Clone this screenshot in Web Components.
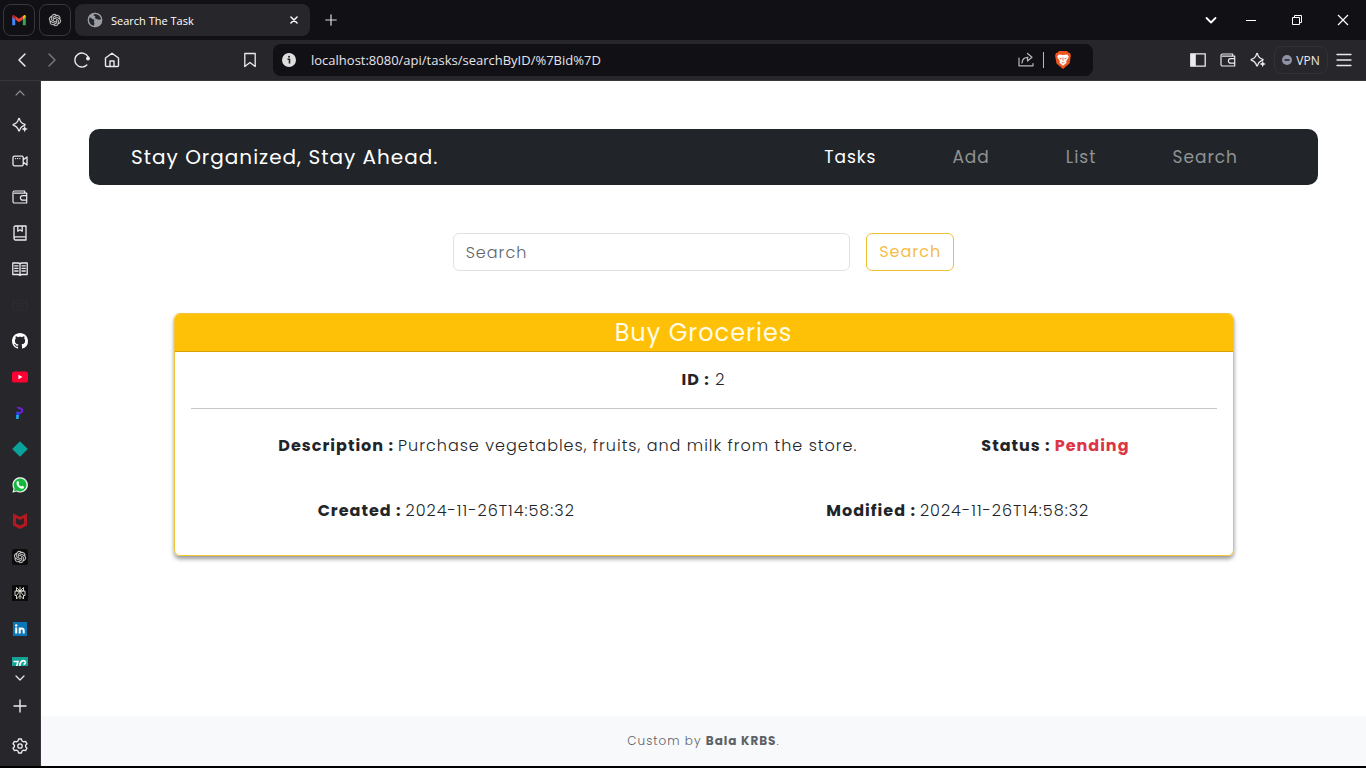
<!DOCTYPE html>
<html lang="en">
<head>
<meta charset="utf-8">
<title>Search The Task</title>
<style>
  html, body { margin: 0; height: 100%; background: #000; }
  body { font-family: "Open Sans", "Noto Sans", sans-serif; }
</style>
</head>
<body>
<browser-window>
  <tab-strip slot="tabs"></tab-strip>
  <tool-bar slot="toolbar"></tool-bar>
  <side-panel slot="side"></side-panel>
  <task-page>
    <task-nav slot="nav"></task-nav>
    <task-search></task-search>
    <task-card>
      <span slot="title">Buy Groceries</span>
      <span slot="id">2</span>
      <span slot="description">Purchase vegetables, fruits, and milk from the store.</span>
      <span slot="status">Pending</span>
      <span slot="created">2024-11-26T14:58:32</span>
      <span slot="modified">2024-11-26T14:58:32</span>
    </task-card>
    <page-footer slot="footer"></page-footer>
  </task-page>
</browser-window>

<script>
const KNOT = 'M22.2819 9.8211a5.9847 5.9847 0 0 0-.5157-4.9108 6.0462 6.0462 0 0 0-6.5098-2.9A6.0651 6.0651 0 0 0 4.9807 4.1818a5.9847 5.9847 0 0 0-3.9977 2.9 6.0462 6.0462 0 0 0 .7427 7.0966 5.98 5.98 0 0 0 .511 4.9107 6.051 6.051 0 0 0 6.5146 2.9001A5.9847 5.9847 0 0 0 13.2599 24a6.0557 6.0557 0 0 0 5.7718-4.2058 5.9894 5.9894 0 0 0 3.9977-2.9001 6.0557 6.0557 0 0 0-.7475-7.0729zm-9.022 12.6081a4.4755 4.4755 0 0 1-2.8764-1.0408l.1419-.0804 4.7783-2.7582a.7948.7948 0 0 0 .3927-.6813v-6.7369l2.02 1.1686a.071.071 0 0 1 .038.052v5.5826a4.504 4.504 0 0 1-4.4945 4.4944zm-9.6607-4.1254a4.4708 4.4708 0 0 1-.5346-3.0137l.142.0852 4.783 2.7582a.7712.7712 0 0 0 .7806 0l5.8428-3.3685v2.3324a.0804.0804 0 0 1-.0332.0615L9.74 19.9502a4.4992 4.4992 0 0 1-6.1408-1.6464zM2.3408 7.8956a4.485 4.485 0 0 1 2.3655-1.9728V11.6a.7664.7664 0 0 0 .3879.6765l5.8144 3.3543-2.0201 1.1685a.0757.0757 0 0 1-.071 0l-4.8303-2.7865A4.504 4.504 0 0 1 2.3408 7.872zm16.5963 3.8558L13.1038 8.364 15.1192 7.2a.0757.0757 0 0 1 .071 0l4.8303 2.7913a4.4944 4.4944 0 0 1-.6765 8.1042v-5.6772a.79.79 0 0 0-.407-.667zm2.0107-3.0231l-.142-.0852-4.7735-2.7818a.7759.7759 0 0 0-.7854 0L9.409 9.2297V6.8974a.0662.0662 0 0 1 .0284-.0615l4.8303-2.7866a4.4992 4.4992 0 0 1 6.6802 4.66zM8.3065 12.863l-2.02-1.1638a.0804.0804 0 0 1-.038-.0567V6.0742a4.4992 4.4992 0 0 1 7.3757-3.4537l-.142.0805L8.704 5.459a.7948.7948 0 0 0-.3927.6813zm1.0976-2.3654l2.602-1.4998 2.6069 1.4998v2.9994l-2.5974 1.4997-2.6067-1.4997Z';

/* Each icon: drawn on a 16 x 16 grid, in the current colour unless it is a brand mark. */
const line = (d, w = 1.3) => `<path d="${d}" fill="none" stroke="currentColor" stroke-width="${w}" stroke-linecap="round" stroke-linejoin="round"/>`;
const ICONS = {
  gmail: '<path d="M1.2 13.2V4.3l3 2.3v6.6z" fill="#4285f4"/><path d="M11.8 13.2V6.6l3-2.3v8.900z" fill="#34a853"/><path d="M11.800 4.200l1.100-.9c1-.6 1.900 0 1.900 1.200v.6l-3 2.300z" fill="#fbbc04"/><path d="M4.200 3.900L8 6.800l3.800-2.900v3.500L8 10.300 4.200 7.400z" fill="#ea4335"/><path d="M1.200 4.500c0-1.200 1-1.800 2-1.200l1 .7v3.400l-3-2.300z" fill="#c5221f"/>',
  knot: `<g transform="translate(2 2) scale(.5)"><path d="${KNOT}" fill="#d8d8d8" stroke="#d8d8d8" stroke-width=".4"/></g>`,
  knotbox: `<rect width="16" height="16" rx="2" fill="#0c0c0d"/><g transform="translate(2 2) scale(.5)"><path d="${KNOT}" fill="#d8d8d8" stroke="#d8d8d8" stroke-width=".4"/></g>`,
  globe: '<circle cx="8" cy="8" r="7.200" fill="#9a9ea4"/><path d="M2.500 5.200c1.500.2 2.200 1.800 3.600 2 1.400.2 1.600 1 .9 2-.6.900.5 1.300.4 2.400-.1 1.300-.8 2-1 3.400C3 14 .8 11.500.8 8c0-1 .8-2.500 1.700-2.800zM7 2.200c1.500.300 2.500-.5 4-.3 2 1 3.500 3 4 5.300-1 .9-2.200-.2-3.200.4-1.200.5-1.400-.8-2.600-.8-1 0-1.500-.9-.9-1.700.5-.7-.6-.8-1.200-1.300-.6-.4-.6-1.200-.1-1.600z" fill="#27262b"/><circle cx="8" cy="8" r="6.700" fill="none" stroke="#9a9ea4" stroke-width="1.300"/>',
  close: line('M4.500 4.500l7 7M11.500 4.500l-7 7', 1.700),
  plus: line('M8 2v12M2 8h12', 1.400),
  down: line('M3.500 6l4.500 4.500L12.500 6', 1.800),
  thindown: line('M4 6l4 4 4-4', 1.200),
  thinup: line('M4 10l4-4 4 4', 1.200),
  minimise: '<path d="M3 8.500h10" stroke="currentColor" fill="none"/>',
  restore: '<path d="M3.500 5.500h7v7h-7zM5.500 5.500v-2h7v7h-2" stroke="currentColor" fill="none"/>',
  winclose: '<path d="M3 3l10 10M13 3L3 13" stroke="currentColor" fill="none" stroke-width="1.200"/>',
  back: line('M11 2L5 8l6 6', 1.500),
  forward: line('M5 2l6 6-6 6', 1.500),
  reload: line('M12.800 13.100A7 7 0 1 1 14.200 5', 1.400) + '<circle cx="14" cy="6.500" r="1.900" fill="currentColor"/>',
  home: line('M1.500 6L8 1.200 14.500 6v7.500c0 .6-.4 1-1 1h-11c-.6 0-1-.4-1-1zM6 14.300V9h4v5.300', 1.400),
  bookmark: line('M2.800 1.500h10.400v13L8 10.500l-5.200 4z', 1.300),
  info: '<circle cx="8" cy="8" r="7" fill="#dededf"/><path d="M6.500 7.200h2v4.300" stroke="#27262b" stroke-width="1.600" fill="none"/><circle cx="8" cy="4.700" r="1" fill="#27262b"/>',
  share: line('M1 6v7.800h14V11.500M4 11c.2-3.800 2.500-5.700 6-5.700M9.500 1.500L14 5.300 9.500 9V5.300', 1.200),
  brave: '<path d="M4.500 0h7L13 1.500l1.300.2.700 2.500-1.200 7L8 16l-5.800-4.800L1 4.200l.7-2.500L3 1.500z" fill="#f0541e"/><path d="M4.200 3l3.800.6 3.800-.6 1.400 2.200-2.400 4 .4 1.300L8 13l-3.200-2.500.4-1.300-2.400-4z" fill="#fff"/><path d="M4.500 5.700l2.300.7-.7 1.200zM11.500 5.700l-2.300.7.7 1.200zM6.200 9.700l1.800.6 1.800-.6L8 11.200zM7.600 5.800h.8v2.800h-.8z" fill="#f0541e"/>',
  panel: '<path d="M.800 1.800h14.400v12.400H.800z" fill="none" stroke="currentColor" stroke-width="1.300"/><path d="M.800 1.800h5v12.400h-5z" fill="currentColor"/>',
  wallet: line('M12.700 4V2H2.500A1.500 1.500 0 0 0 1 3.500v9A1.500 1.500 0 0 0 2.500 14h12.200V4.200H2.500M14.700 6.600h-4a2.300 2.300 0 0 0 0 4.600h4z', 1.200),
  sparkle: line('M10.300 9.300C9 9.900 8.200 11 7.600 13.400c-.2.800-.9.800-1.100 0C5.700 10.300 4.800 9.200 1.700 8.300c-.8-.2-.8-.9 0-1.100C4.800 6.300 5.700 5.300 6.500 2.100c.2-.8.9-.8 1.100 0 .8 3.200 1.700 4.200 4.900 5.100.8.2.8.9 0 1.100z', 1.300) + '<path d="M12.700 8.800l.9 2.300 2.300.9-2.300.9-.9 2.300-.9-2.300-2.300-.9 2.300-.9z" fill="currentColor"/>',
  minus: '<circle cx="8" cy="8" r="8" fill="#8f92a6"/><path d="M4 8h8" stroke="#27262b" stroke-width="2.600"/>',
  menu: line('M1 2.500h14M1 8h14M1 13.500h14', 1.300),
  camera: line('M2.400 3.200h7.400a1.400 1.400 0 0 1 1.400 1.400v6.800a1.400 1.400 0 0 1-1.400 1.400H2.400A1.400 1.400 0 0 1 1 11.400V4.600a1.400 1.400 0 0 1 1.400-1.400zM11.300 6.700L15 4v8l-3.700-2.700M3.500 5.600h.1M5.600 5.600h.1M7.800 5.600h.1', 1.300),
  notebook: line('M2 13V2.300A1.300 1.300 0 0 1 3.300 1H14v14H3.500A1.500 1.500 0 0 1 2 13.500 1.800 1.800 0 0 1 3.800 11.800H14M5.800 1.200v5L8 4.800l2.200 1.400v-5', 1.300),
  book: line('M8 2.800C7.500 2 7 2 6 2H.800v11.500H6c1 0 1.500 0 2 1 .5-1 1-1 2-1h5.200V2H10c-1 0-1.500 0-2 .8zM8 3v11M2.700 4.800H6M2.700 7.400H6M2.700 10H6M10 4.800h3.300M10 7.400h3.300M10 10h3.300', 1.300),
  faint: '<g opacity=".04">' + line('M1 3h14v10H1zM1 6h14M4 9h5', 1.200) + '</g>',
  github: '<path fill="#fff" d="M8 0C3.580 0 0 3.580 0 8c0 3.540 2.290 6.530 5.470 7.590.4.070.55-.17.55-.38 0-.19-.01-.82-.01-1.490-2.010.37-2.530-.49-2.690-.94-.09-.23-.48-.94-.82-1.130-.28-.15-.68-.52-.01-.53.63-.01 1.080.58 1.230.82.72 1.210 1.870.87 2.330.66.07-.52.28-.87.51-1.070-1.780-.2-3.640-.89-3.640-3.950 0-.87.31-1.590.82-2.150-.08-.2-.36-1.020.08-2.120 0 0 .67-.21 2.200.82.64-.18 1.320-.27 2-.27s1.360.09 2 .27c1.530-1.040 2.200-.82 2.200-.82.44 1.100.16 1.920.08 2.120.51.56.82 1.270.82 2.150 0 3.070-1.870 3.750-3.650 3.950.29.25.54.73.54 1.480 0 1.070-.01 1.930-.01 2.200 0 .21.15.46.55.38A8.010 8.010 0 0 0 16 8c0-4.420-3.580-8-8-8z"/>',
  youtube: '<rect y="2.400" width="16" height="11.200" rx="2.600" fill="#ff0033"/><path d="M6.400 5.700L10.500 8l-4.100 2.300z" fill="#fff"/>',
  pmark: '<path d="M4.500 2.200c3-.6 6.800.4 6.800 3.200 0 2.600-2.400 3.400-4.600 3.400l.8-2c1.400 0 2-.5 1.800-1.400-.3-1.200-2.700-1-4.800-3.200z" fill="#6a22dd"/><path d="M4.500 6.500l3.200.5-.4 4H4z" fill="#3a3df0"/><path d="M4.100 10h3l-.4 4H4z" fill="#1aa3dc"/>',
  diamond: '<path d="M8 .2L15.800 8 8 15.800.2 8z" fill="#0aa39b"/>',
  whatsapp: '<path d="M.4 15.700l1.100-4A7.700 7.700 0 1 1 4.400 14.600z" fill="#f4f4f4"/><path d="M1.900 14.200l.8-2.700a6.400 6.400 0 1 1 2.100 2z" fill="#12b83b"/><path d="M5.500 4.200c.5-.3 1 0 1.200.6l.4 1c.1.400-.2.700-.6 1.200.7 1.300 1.600 2.100 2.700 2.500.4-.6.700-.9 1-.7l1.600.8c.4.200.2 1.300-.4 1.800-1.300 1-3.400.2-5-1.400S4 6 4.800 4.800z" fill="#fff"/>',
  mcafee: '<path d="M1 .500l7 3.200L15 .500v12L8 16l-7-3.500z" fill="#b3191f"/><path d="M4 5l4 1.900L12 5v5.500l-4 2-4-2z" fill="#27262b"/>',
  perplex: '<rect width="16" height="16" fill="#0b0b0b"/><path d="M8 1.800v12.400M8 6L4.500 2.500V6zM8 6l3.500-3.500V6zM3 6h10v4.500h-1.500V14L8 10.500 4.500 14v-3.500H3zM8 6l-3.500 4.500M8 6l3.500 4.500" fill="none" stroke="#e9e6dc" stroke-width=".9"/>',
  linkedin: '<rect x="1" y="1" width="14" height="14" fill="#0a76b5"/><circle cx="4.200" cy="4.400" r="1.200" fill="#fff"/><path d="M4.200 6.500v6M7.700 12.500v-6M7.700 9.500c0-2.700 4-2.700 4 0v3" fill="none" stroke="#fff" stroke-width="2"/>',
  teal: '<rect width="16" height="16" fill="#15a295"/><path d="M1.500 4.500h4.500L3.500 13M10.500 4c-3 1-3.500 6-1.200 9M9.500 4.200c4-1.700 5.500 2 2 3.300" fill="none" stroke="#fff" stroke-width="1.600"/>',
  gear: line('M6.600 1h2.800l.6 2 1.600.9 2-.5 1.400 2.400L13.600 7.200v1.600L15 10.200l-1.400 2.400-2-.5-1.600.9-.6 2H6.600l-.6-2-1.600-.9-2 .5L1 10.200l1.400-1.400V7.200L1 5.800l1.400-2.400 2 .5L6 3z', 1.300) + '<circle cx="8" cy="8" r="2.200" fill="none" stroke="currentColor" stroke-width="1.300"/>'
};

const define = (name, markup) => {
  const template = document.createElement('template');
  template.innerHTML = markup;
  customElements.define(name, class extends HTMLElement {
    constructor() {
      super();
      this.attachShadow({ mode: 'open' }).append(template.content.cloneNode(true));
    }
  });
};

customElements.define('ui-icon', class extends HTMLElement {
  connectedCallback() {
    if (this.shadowRoot) return;
    this.attachShadow({ mode: 'open' }).innerHTML = `
      <style>:host { display: block; width: 16px; height: 16px; flex: none; } svg { display: block; width: 100%; height: 100%; }</style>
      <svg viewBox="0 0 16 16" aria-hidden="true">${ICONS[this.getAttribute('name')] || ''}</svg>`;
  }
});

define('browser-window', `
  <style>
    :host { display: flex; flex-direction: column; height: 100vh; box-sizing: border-box; border-bottom: 2px solid #000; color: #eceaf0; }
    .body { flex: 1; min-height: 0; display: flex; border-top: 1px solid #38363b; }
    ::slotted(task-page) { flex: 1; min-width: 0; }
  </style>
  <slot name="tabs"></slot>
  <slot name="toolbar"></slot>
  <div class="body"><slot name="side"></slot><slot></slot></div>`);

define('tab-strip', `
  <style>
    :host { display: flex; align-items: center; height: 40px; padding-left: 3px; background: #111015; }
    button { display: grid; place-items: center; border: 0; padding: 0; background: none; color: inherit; font: inherit; height: 32px; }
    .tabs { display: flex; gap: 4px; }
    .pin { box-sizing: border-box; width: 32px; border: 1px solid #38373d; border-radius: 8px; }
    .tab { box-sizing: border-box; display: flex; align-items: center; gap: 8px; width: 235px; height: 32px; padding: 0 8px 0 12px; border-radius: 8px; background: #27262b; font-size: 11px; color: #fff; }
    .tab span { flex: 1; }
    .tab button { width: 16px; }
    .new { width: 42px; color: #d9d8dc; }
    .tab button ui-icon, .new ui-icon { width: 14px; height: 14px; }
    .controls { display: flex; margin-left: auto; color: #fff; }
    .controls button { width: 46px; }
    .controls .list { width: 34px; }
  </style>
  <div class="tabs">
    <button class="pin" aria-label="Mail"><ui-icon name="gmail"></ui-icon></button>
    <button class="pin" aria-label="Chat"><ui-icon name="knot"></ui-icon></button>
    <div class="tab"><ui-icon name="globe"></ui-icon><span>Search The Task</span><button aria-label="Close tab"><ui-icon name="close"></ui-icon></button></div>
  </div>
  <button class="new" aria-label="New tab"><ui-icon name="plus"></ui-icon></button>
  <div class="controls">
    <button class="list" aria-label="Tab list"><ui-icon name="down"></ui-icon></button>
    <button aria-label="Minimise"><ui-icon name="minimise"></ui-icon></button>
    <button aria-label="Restore"><ui-icon name="restore"></ui-icon></button>
    <button aria-label="Close window"><ui-icon name="winclose"></ui-icon></button>
  </div>`);

define('tool-bar', `
  <style>
    :host { display: flex; align-items: center; height: 40px; padding: 0 7px; background: #27262b; }
    button { display: grid; place-items: center; width: 30px; height: 30px; border: 0; padding: 0; background: none; color: inherit; font: inherit; }
    .off { color: #77757c; }
    .group { display: flex; align-items: center; }
    .mark { margin: 0 8px 0 108px; }
    form { flex: 1; min-width: 0; display: flex; align-items: center; height: 32px; border-radius: 8px; background: #111015; margin-right: 90px; padding: 0 13px 0 8px; }
    input { flex: 1; min-width: 0; margin-left: 14px; padding: 0; border: 0; outline: 0; background: none; color: #e6e4ea; font: 13px "Open Sans", "Noto Sans", sans-serif; }
    .share { color: #b9b7bd; }
    .rule { width: 1px; height: 16px; margin: 0 2px; background: #bbb9bf; }
    .brave ui-icon { width: 18px; height: 18px; }
    .brave { width: 34px; }
    .vpn { box-sizing: border-box; display: flex; align-items: center; justify-content: center; gap: 4px; width: 54px; height: 28px; margin: 0 1px; border: 1px solid #323137; border-radius: 8px; font-size: 12px; }
    .vpn ui-icon { width: 10px; height: 10px; }
  </style>
  <div class="group">
    <button aria-label="Back"><ui-icon name="back"></ui-icon></button>
    <button class="off" aria-label="Forward"><ui-icon name="forward"></ui-icon></button>
    <button aria-label="Reload"><ui-icon name="reload"></ui-icon></button>
    <button aria-label="Home"><ui-icon name="home"></ui-icon></button>
  </div>
  <button class="mark" aria-label="Bookmark"><ui-icon name="bookmark"></ui-icon></button>
  <form>
    <ui-icon name="info"></ui-icon>
    <input aria-label="Address" value="localhost:8080/api/tasks/searchByID/%7Bid%7D">
    <button type="button" class="share" aria-label="Share"><ui-icon name="share"></ui-icon></button>
    <span class="rule"></span>
    <button type="button" class="brave" aria-label="Shields"><ui-icon name="brave"></ui-icon></button>
  </form>
  <div class="group">
    <button aria-label="Sidebar"><ui-icon name="panel"></ui-icon></button>
    <button aria-label="Wallet"><ui-icon name="wallet"></ui-icon></button>
    <button aria-label="Assistant"><ui-icon name="sparkle"></ui-icon></button>
    <button class="vpn"><ui-icon name="minus"></ui-icon>VPN</button>
    <button aria-label="Menu"><ui-icon name="menu"></ui-icon></button>
  </div>`);

const SIDE = ['sparkle', 'camera', 'wallet', 'notebook', 'book', 'faint', 'github', 'youtube', 'pmark', 'diamond', 'whatsapp', 'mcafee', 'knotbox', 'perplex', 'linkedin', 'teal'];
define('side-panel', `
  <style>
    :host { display: flex; flex-direction: column; width: 40px; border-right: 1px solid #38363b; background: #27262b; }
    button { display: grid; place-items: center; width: 100%; height: 36px; border: 0; padding: 0; background: none; color: inherit; flex: none; }
    .items { flex: 1; min-height: 0; overflow: hidden; display: flex; flex-direction: column; }
    .up { height: 24px; margin-bottom: 2px; color: #8b8990; }
    .more { height: 24px; }
    .add { height: 32px; margin-bottom: 4px; }
    .gear { height: 40px; }
  </style>
  <button class="up" aria-label="Scroll up"><ui-icon name="thinup"></ui-icon></button>
  <div class="items">${SIDE.map(n => `<button aria-label="${n}"><ui-icon name="${n}"></ui-icon></button>`).join('')}</div>
  <button class="more" aria-label="Scroll down"><ui-icon name="thindown"></ui-icon></button>
  <button class="add" aria-label="Add"><ui-icon name="plus"></ui-icon></button>
  <button class="gear" aria-label="Settings"><ui-icon name="gear"></ui-icon></button>`);

define('task-page', `
  <style>
    :host { display: flex; flex-direction: column; overflow: auto; background: #fff; color: #212529; font: 300 16px/24px Poppins, Inter, sans-serif; letter-spacing: 1px; }
    header { padding: 48px 48px 0; }
    main { flex: 1; }
  </style>
  <header><slot name="nav"></slot></header>
  <main><slot></slot></main>
  <slot name="footer"></slot>`);

define('task-nav', `
  <style>
    :host { display: block; }
    nav { display: flex; align-items: center; justify-content: space-between; min-height: 56px; padding: 0 80px 0 42px; border-radius: 10px; background: #212529; font-weight: 400; }
    a { color: #909294; text-decoration: none; }
    .brand { color: #fff; font-size: 20px; }
    ul { display: flex; gap: 76px; margin: 0; padding: 0; list-style: none; font-size: 17px; }
    .active { color: #fff; }
  </style>
  <nav>
    <a class="brand" href="#">Stay Organized, Stay Ahead.</a>
    <ul>
      <li><a class="active" href="#tasks">Tasks</a></li>
      <li><a href="#add">Add</a></li>
      <li><a href="#list">List</a></li>
      <li><a href="#search">Search</a></li>
    </ul>
  </nav>`);

define('task-search', `
  <style>
    :host { display: block; margin-top: 48px; }
    form { display: flex; justify-content: center; gap: 16px; }
    input, button { box-sizing: border-box; height: 38px; padding: 0 12px; border-radius: 6px; font: inherit; letter-spacing: inherit; background: #fff; }
    input { width: 30%; border: 1px solid #dee2e6; color: #212529; }
    input::placeholder { color: #5f656b; opacity: 1; }
    button { min-width: 88px; border: 1px solid #f0c22e; color: #f5bd4a; font-weight: 400; }
  </style>
  <form>
    <input type="search" placeholder="Search" aria-label="Search">
    <button type="button">Search</button>
  </form>`);

define('task-card', `
  <style>
    :host { display: block; width: 80%; margin: 42px auto 32px; }
    article { border: 1px solid #efc53a; border-radius: 6px; text-align: center; box-shadow: 0 3px 4px rgba(0, 0, 0, .4); }
    h1 { margin: 0; padding: 1px 16px; background: #ffc107; border-bottom: 1px solid #d4a106; border-radius: 5px 5px 0 0; color: #fffbe6; font-size: 24px; line-height: 35px; font-weight: 400; }
    .body { padding: 16px; }
    p { margin: 0; }
    b { font-weight: 700; }
    hr { height: 1px; margin: 16px 0 25px; border: 0; background: #c7c8c9; }
    .row { display: grid; grid-template-columns: 24fr 7fr; padding-right: 51px; white-space: nowrap; }
    .times { grid-template-columns: 1fr 1fr; padding: 41px 3px 16px 0; }
    .row p { display: flex; justify-content: center; gap: 4px; }
    .state { color: #dc3545; font-weight: 700; }
  </style>
  <article>
    <h1><slot name="title"></slot></h1>
    <div class="body">
      <p><b>ID :</b> <slot name="id"></slot></p>
      <hr>
      <div class="row">
        <p><b>Description :</b> <slot name="description"></slot></p>
        <p><b>Status :</b> <span class="state"><slot name="status"></slot></span></p>
      </div>
      <div class="row times">
        <p><b>Created :</b> <slot name="created"></slot></p>
        <p><b>Modified :</b> <slot name="modified"></slot></p>
      </div>
    </div>
  </article>`);

define('page-footer', `
  <style>
    :host { display: block; padding: 13px 16px; background: #f8f9fb; color: #5c6166; text-align: center; font-size: 12px; }
    b { font-weight: 700; }
  </style>
  Custom by <b>Bala KRBS</b>.`);
</script>
</body>
</html>
